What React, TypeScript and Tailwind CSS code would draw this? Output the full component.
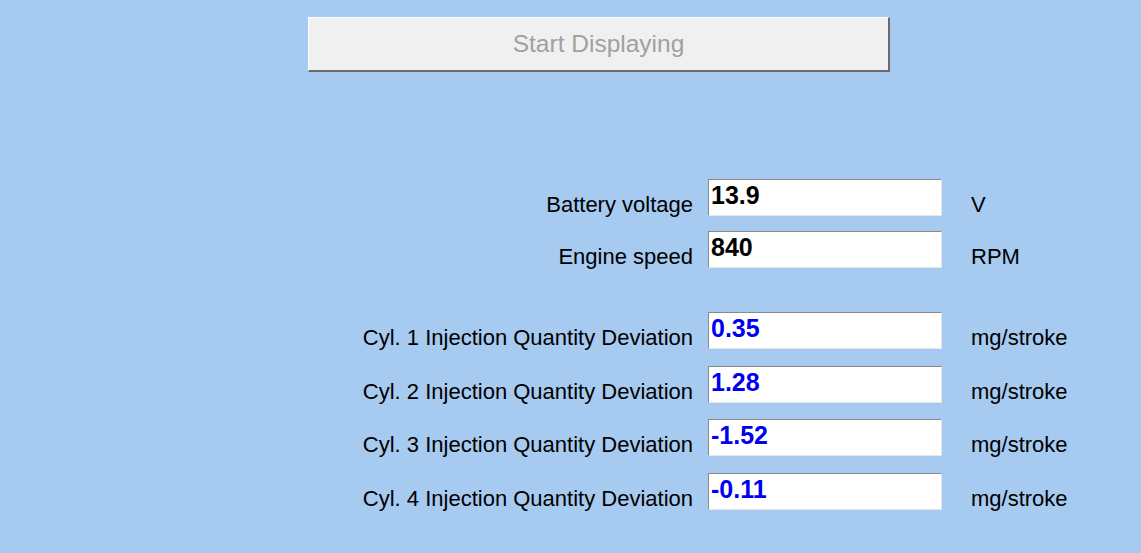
type Reading = {
  label: string;
  value: string;
  unit: string;
  tone: 'black' | 'blue';
  space: string; // top margin before the row
};

const readings: Reading[] = [
  { label: 'Battery voltage', value: '13.9', unit: 'V', tone: 'black', space: 'mt-0' },
  { label: 'Engine speed', value: '840', unit: 'RPM', tone: 'black', space: 'mt-[14px]' },
  { label: 'Cyl. 1 Injection Quantity Deviation', value: '0.35', unit: 'mg/stroke', tone: 'blue', space: 'mt-[43px]' },
  { label: 'Cyl. 2 Injection Quantity Deviation', value: '1.28', unit: 'mg/stroke', tone: 'blue', space: 'mt-[16px]' },
  { label: 'Cyl. 3 Injection Quantity Deviation', value: '-1.52', unit: 'mg/stroke', tone: 'blue', space: 'mt-[15px]' },
  { label: 'Cyl. 4 Injection Quantity Deviation', value: '-0.11', unit: 'mg/stroke', tone: 'blue', space: 'mt-[16px]' },
];

export default function App() {
  return (
    <div className="w-[1141px] h-[553px] overflow-hidden bg-[#a6caf0] font-['Liberation_Sans',Arial,sans-serif]">
      <div className="pt-[17px] pl-[308px]">
        <button
          disabled
          className="w-[582px] h-[55px] bg-[#f0f0f0] border-t border-l border-t-white border-l-white border-b-2 border-r-2 border-b-[#6b6b6b] border-r-[#6b6b6b] text-[24.5px] text-[#a0a0a0] flex items-center justify-center"
        >
          Start Displaying
        </button>
      </div>

      <div className="mt-[107px] flex flex-col">
        {readings.map((r) => (
          <Row key={r.label} reading={r} />
        ))}
      </div>
    </div>
  );
}

function Row({ reading }: { reading: Reading }) {
  return (
    <div className={`flex items-start ${reading.space}`}>
      <div className="w-[693px] text-right pt-[13px] text-[22px] leading-[25px] text-black whitespace-nowrap">
        {reading.label}
      </div>
      <div className="ml-[15px] w-[234px] h-[37px] bg-white border border-t-[#8a8a8a] border-l-[#8a8a8a] border-b-[#e6e6e6] border-r-[#e6e6e6] pl-[2px] pt-[1px]">
        <span
          className={
            'text-[25px] leading-[28px] font-bold ' +
            (reading.tone === 'blue' ? 'text-[#0000f0]' : 'text-black')
          }
        >
          {reading.value}
        </span>
      </div>
      <div className="ml-[29px] pt-[13px] text-[22px] leading-[25px] text-black whitespace-nowrap">
        {reading.unit}
      </div>
    </div>
  );
}
